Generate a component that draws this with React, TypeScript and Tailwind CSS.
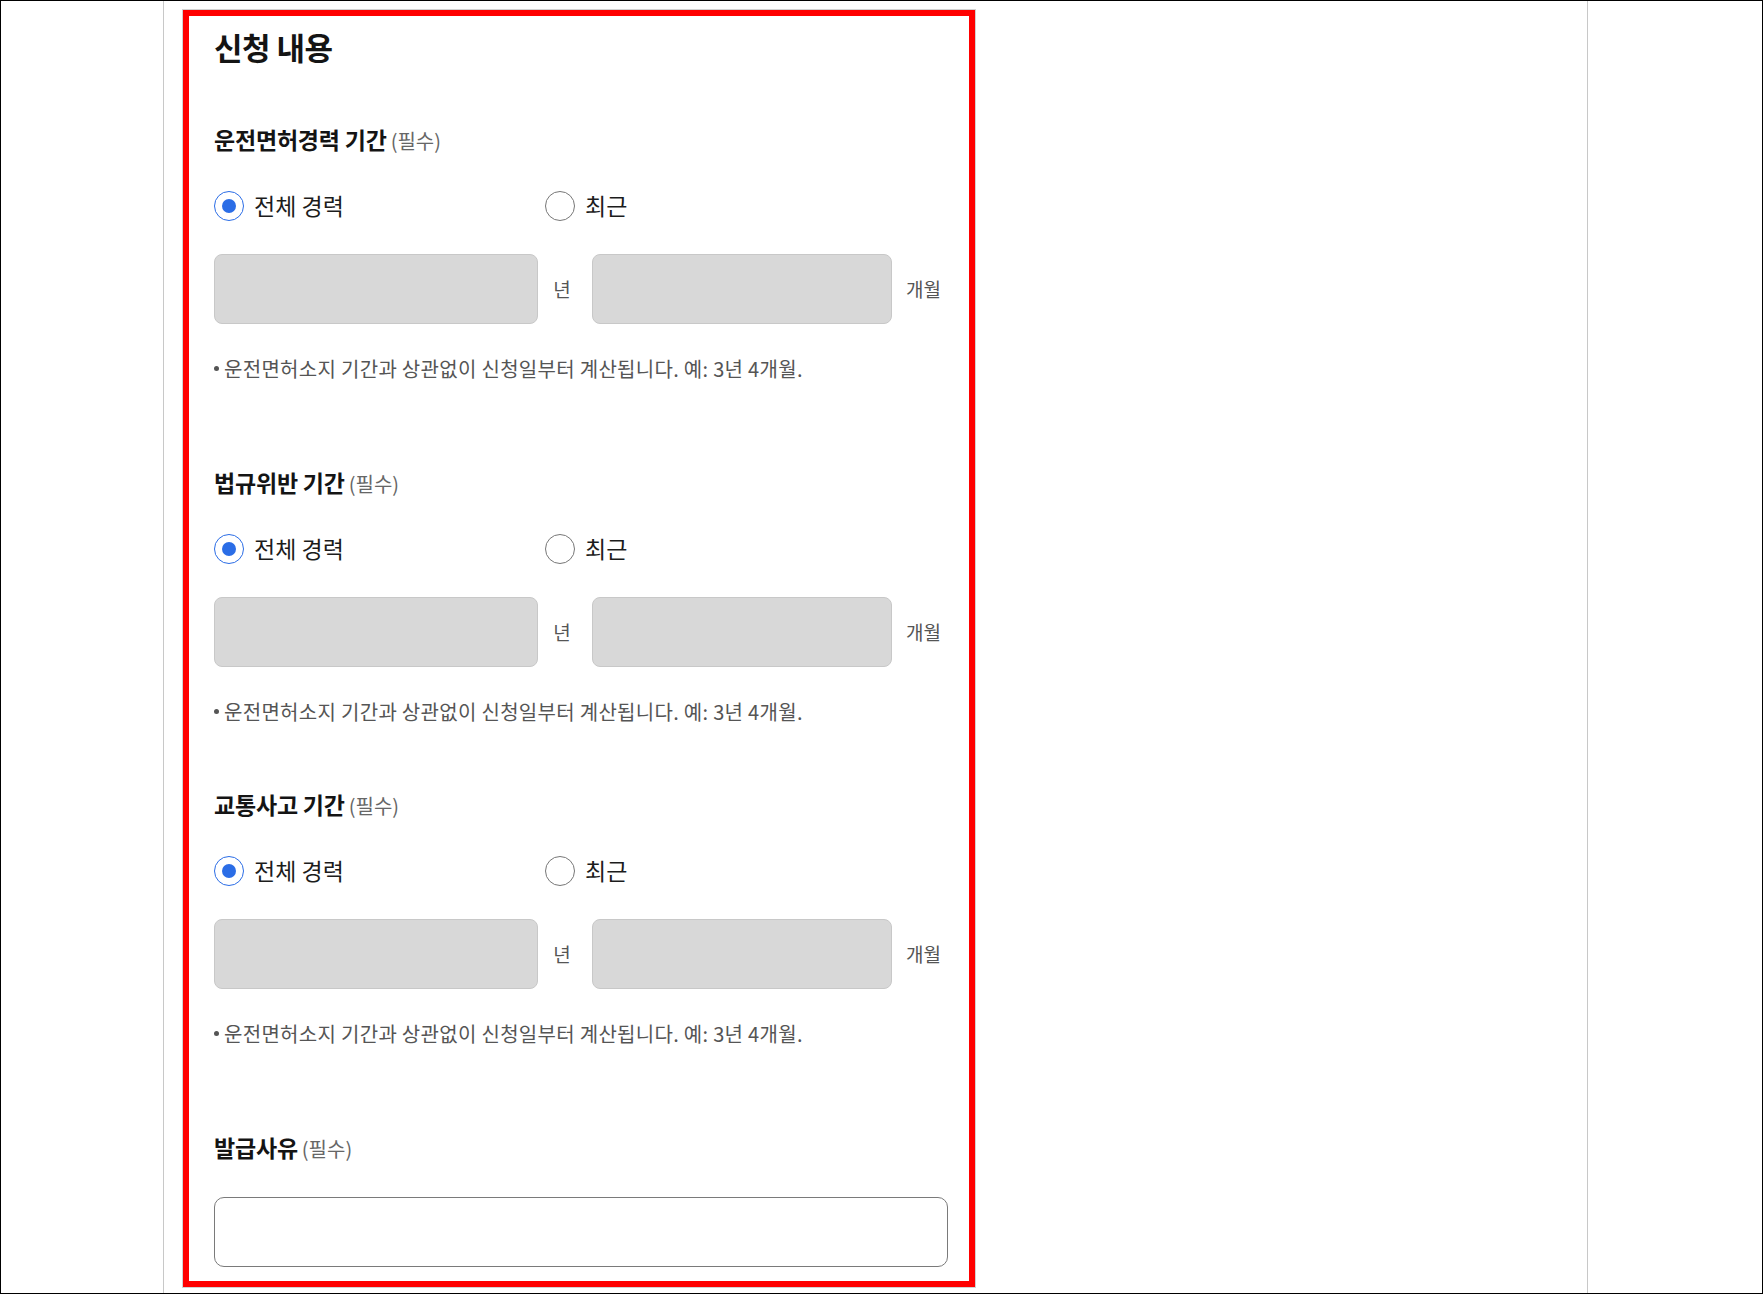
import type { ReactNode } from 'react'

const FONT = { fontFamily: '"Noto Sans CJK KR", "Noto Sans", sans-serif' }

function Radio({ checked, children }: { checked?: boolean; children: ReactNode }) {
  return (
    <label className="flex items-center gap-[10px]">
      {checked ? (
        <span className="flex h-[30px] w-[30px] items-center justify-center rounded-full border-[1.5px] border-[#2b6de6] bg-white">
          <span className="h-[14px] w-[14px] rounded-full bg-[#2b6de6]" />
        </span>
      ) : (
        <span className="h-[30px] w-[30px] rounded-full border border-[#777777] bg-white" />
      )}
      <span className="pb-[3px] text-[23px] leading-[28px] text-[#1c1c1c]">{children}</span>
    </label>
  )
}

function FieldLabel({ children }: { children: ReactNode }) {
  return (
    <h3 className="h-[30px] whitespace-nowrap text-[23px] font-bold leading-[26px] tracking-[-0.2px] text-[#141414]">
      {children}
      <span className="ml-[4px] text-[20px] font-normal tracking-normal text-[#666666]">(필수)</span>
    </h3>
  )
}

/** 기간 입력 블록: 라벨 / 라디오 / 년·개월 입력 / 안내문 */
function PeriodSection({ title, className }: { title: string; className?: string }) {
  return (
    <section className={className}>
      <FieldLabel>{title}</FieldLabel>
      <div className="mt-[35px] flex h-[30px] items-center">
        <div className="w-[331px]">
          <Radio checked>전체 경력</Radio>
        </div>
        <Radio>최근</Radio>
      </div>
      <div className="mt-[33px] flex h-[70px] items-center">
        <div className="h-full w-[324px] rounded-[8px] border border-[#c8c8c8] bg-[#d8d8d8]" />
        <span className="w-[54px] pr-[6px] text-center text-[19px] text-[#555555]">년</span>
        <div className="h-full w-[300px] rounded-[8px] border border-[#c8c8c8] bg-[#d8d8d8]" />
        <span className="ml-[14px] text-[19px] text-[#555555]">개월</span>
      </div>
      <p className="mt-[31px] flex h-[28px] items-center whitespace-nowrap text-[20px] leading-[28px] tracking-[0.3px] text-[#555555]">
        <span className="mr-[5px] mb-[2px] h-[5px] w-[5px] rounded-full bg-[#555555]" />
        운전면허소지 기간과 상관없이 신청일부터 계산됩니다. 예: 3년 4개월.
      </p>
    </section>
  )
}

export default function App() {
  return (
    <div style={FONT} className="h-[1294px] w-[1763px] overflow-hidden border border-black bg-white">
      <div className="ml-[162px] h-full w-[1425px] border-x border-[#c8c8c8] pl-[19px] pt-[9px]">
        <div className="w-[792px] border-[6px] border-[#ff0000] bg-white pb-[14px] pl-[25px] pt-[12px] shadow-[0_0_0_1px_#d2d2d2]">
          <h2 className="h-[40px] text-[31px] font-bold leading-[38px] tracking-[-0.5px] text-[#141414]">신청 내용</h2>

          <PeriodSection title="운전면허경력 기간" className="mt-[58px]" />
          <PeriodSection title="법규위반 기간" className="mt-[86px]" />
          <PeriodSection title="교통사고 기간" className="mt-[65px]" />

          <section className="mt-[86px]">
            <FieldLabel>발급사유</FieldLabel>
            <textarea className="mt-[33px] block h-[70px] w-[734px] resize-none rounded-[10px] border border-[#7a7a7a] bg-white" />
          </section>
        </div>
      </div>
    </div>
  )
}
